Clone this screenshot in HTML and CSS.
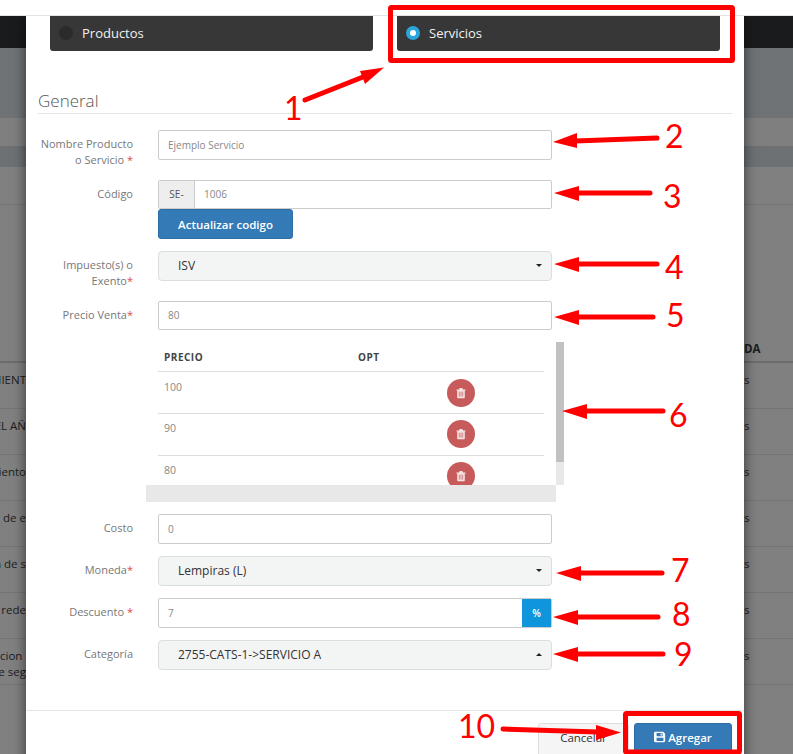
FILE: index.html
```html
<!DOCTYPE html>
<html lang="es">
<head>
<meta charset="utf-8">
<title>Agregar producto o servicio</title>
<link rel="stylesheet" href="styles.css">
</head>
<body>
<div class="page">
  <div class="pg-top"></div>
  <div class="pg-nav"></div>
  <div class="pg-band"></div>
  <div class="pg-light"></div>
  <div class="pg-dark"></div>
  <div class="pg-row pg-r38"></div>
  <div class="pg-row pg-head"><span class="pg-l"></span><span class="pg-r pg-b">DA</span></div>
  <div class="pg-row"><span class="pg-l">MIENT</span><span class="pg-r">s</span></div>
  <div class="pg-row"><span class="pg-l">EL AÑ</span><span class="pg-r">s</span></div>
  <div class="pg-row"><span class="pg-l">iento</span><span class="pg-r">s</span></div>
  <div class="pg-row"><span class="pg-l">a de e</span><span class="pg-r">s</span></div>
  <div class="pg-row"><span class="pg-l">a de s</span><span class="pg-r">s</span></div>
  <div class="pg-row"><span class="pg-l">e rede</span><span class="pg-r">s</span></div>
  <div class="pg-row"><span class="pg-l">cion<br>e seg</span><span class="pg-r">s</span></div>
</div>

<div class="modal">
  <div class="tabs">
    <div class="tab"><span class="radio"></span><span>Productos</span></div>
    <div class="tab"><span class="radio on"></span><span>Servicios</span></div>
  </div>
  <form class="form">
    <h4 class="legend">General</h4>
    <div class="row gap20">
      <label class="lab">Nombre Producto o Servicio <em>*</em></label>
      <div class="input">Ejemplo Servicio</div>
    </div>
    <div class="row">
      <label class="lab">Código</label>
      <div class="field">
        <div class="input group"><span class="prefix">SE-</span><span class="gval">1006</span></div>
        <button type="button" class="btn-update">Actualizar codigo</button>
      </div>
    </div>
    <div class="row gap20">
      <label class="lab">Impuesto(s) o Exento<em>*</em></label>
      <div class="select"><span>ISV</span><i class="caret"></i></div>
    </div>
    <div class="row">
      <label class="lab">Precio Venta<em>*</em></label>
      <div class="input short">80</div>
    </div>
    <div class="scrollbox">
      <div class="viewport">
        <div class="thead"><span class="c1">PRECIO</span><span class="c2">OPT</span></div>
        <div class="trow"><span class="c1">100</span><span class="c2"><span class="del"><svg viewBox="0 0 12 12" class="trash"><path d="M1.5 2.6h9v1h-.7v6.6c0 .6-.4 1-.9 1H3.1c-.5 0-.9-.4-.9-1V3.6h-.7zM4 2.4l.5-1.1c.1-.2.2-.3.4-.3h2.2c.2 0 .3.1.4.3l.5 1.1z"/><path class="bars" d="M4.3 4.6v5M6 4.6v5M7.7 4.6v5"/></svg></span></span></div>
        <div class="trow t2"><span class="c1">90</span><span class="c2"><span class="del"><svg viewBox="0 0 12 12" class="trash"><path d="M1.5 2.6h9v1h-.7v6.6c0 .6-.4 1-.9 1H3.1c-.5 0-.9-.4-.9-1V3.6h-.7zM4 2.4l.5-1.1c.1-.2.2-.3.4-.3h2.2c.2 0 .3.1.4.3l.5 1.1z"/><path class="bars" d="M4.3 4.6v5M6 4.6v5M7.7 4.6v5"/></svg></span></span></div>
        <div class="trow t2"><span class="c1">80</span><span class="c2"><span class="del"><svg viewBox="0 0 12 12" class="trash"><path d="M1.5 2.6h9v1h-.7v6.6c0 .6-.4 1-.9 1H3.1c-.5 0-.9-.4-.9-1V3.6h-.7zM4 2.4l.5-1.1c.1-.2.2-.3.4-.3h2.2c.2 0 .3.1.4.3l.5 1.1z"/><path class="bars" d="M4.3 4.6v5M6 4.6v5M7.7 4.6v5"/></svg></span></span></div>
      </div>
      <div class="vtrack"><div class="vthumb"></div></div>
      <div class="htrack"></div>
    </div>
    <div class="row">
      <label class="lab">Costo</label>
      <div class="input">0</div>
    </div>
    <div class="row">
      <label class="lab">Moneda<em>*</em></label>
      <div class="select"><span>Lempiras (L)</span><i class="caret"></i></div>
    </div>
    <div class="row">
      <label class="lab">Descuento <em>*</em></label>
      <div class="input group tall"><span class="gval2">7</span><span class="addon">%</span></div>
    </div>
    <div class="row">
      <label class="lab">Categoría</label>
      <div class="select"><span>2755-CATS-1-&gt;SERVICIO A</span><i class="caret up"></i></div>
    </div>
  </form>
  <div class="footer">
    <button type="button" class="btn-cancel">Cancelar</button>
    <button type="button" class="btn-add"><svg viewBox="0 0 14 14" class="save"><path fill-rule="evenodd" d="M1.5 1h9.200L13 3.300v8.200c0 .8-.7 1.500-1.500 1.500h-10C.7 13 0 12.300 0 11.500v-9C0 1.700.7 1 1.500 1zM3 2.300v3.400c0 .2.100.3.300.3h6.400c.2 0 .3-.1.300-.3V2.300zM3 8v3.700h8V8zM7.600 2.800h1.500v2.400H7.600z"/></svg>Agregar</button>
  </div>
</div>

<svg class="marks" viewBox="0 0 793 754" width="793" height="754">
  <rect class="box" x="390.500" y="7.500" width="342" height="53" rx="1"/>
  <rect class="box" x="625.500" y="713.500" width="114" height="38.500" rx="1"/>
  <path class="shaft" d="M305 100L368 75"/><path class="head" d="M384 67.500L360 71L365 84z"/>
  <path class="shaft" d="M657 138L575 141"/><path class="head" d="M553 142L577 133L577 148z"/>
  <path class="shaft" d="M650 193L577 193"/><path class="head" d="M554 193L579 186L579 201z"/>
  <path class="shaft" d="M657 264L577 264"/><path class="head" d="M554 264L579 257L579 272z"/>
  <path class="shaft" d="M653 317L577 317"/><path class="head" d="M554 317L579 310L579 325z"/>
  <path class="shaft" d="M663 411L585 411"/><path class="head" d="M562 411L587 404L587 419z"/>
  <path class="shaft" d="M662 573L579 573"/><path class="head" d="M556 573L581 566L581 581z"/>
  <path class="shaft" d="M658 617L576 617"/><path class="head" d="M553 617L578 610L578 625z"/>
  <path class="shaft" d="M663 654L576 654"/><path class="head" d="M553 654L578 647L578 662z"/>
  <path class="shaft" d="M503 729L598 732"/><path class="head" d="M621 732.500L596 725L596 740z"/>
  <text x="284" y="120">1</text>
  <text x="665" y="148">2</text>
  <text x="663" y="208">3</text>
  <text x="665" y="279">4</text>
  <text x="666" y="327">5</text>
  <text x="669" y="427">6</text>
  <text x="671" y="582">7</text>
  <text x="672" y="626">8</text>
  <text x="674" y="666">9</text>
  <text x="458" y="738">10</text>
</svg>
</body>
</html>
```

FILE: styles.css
```css
* { box-sizing: border-box; }
html, body { margin: 0; height: 754px; overflow: hidden; background: #808080; }
body { font-family: "Open Sans", sans-serif; font-size: 12px; color: #333; position: relative; }

/* dimmed page behind the dialog */
.page { width: 793px; color: #1c1c1c; font-size: 11.5px; }
.pg-top { height: 16px; background: #fff; border-bottom: 1px solid #e4e4e4; position: relative; z-index: 2; }
.pg-nav { height: 32px; background: #191b1c; }
.pg-band { height: 70px; background: #6f7375; }
.pg-light { height: 28px; background: #7f7f7f; }
.pg-dark { height: 21px; background: #6d7173; }
.pg-row { height: 46px; display: flex; justify-content: space-between; border-bottom: 1px solid #747474; padding-top: 9px; line-height: 16px; }
.pg-r38 { height: 38px; }
.pg-head { height: 158px; border-bottom: 2px solid #6c6c6c; padding-top: 136px; }
.pg-l { width: 26px; display: block; direction: rtl; overflow: hidden; white-space: nowrap; text-align: left; }
.pg-r { width: 49px; overflow: hidden; white-space: nowrap; }
.pg-b { font-weight: 700; }

/* dialog */
.modal { position: absolute; left: 26px; top: 16px; width: 718px; height: 760px; background: #fff; box-shadow: 0 0 12px rgba(0, 0, 0, .6); z-index: 1; }
.tabs { display: flex; gap: 24px; padding-left: 24px; }
.tab { width: 323px; height: 35px; background: #373737; border-radius: 0 0 3px 3px; color: #f2f2f2; font-size: 13px; display: flex; align-items: center; gap: 9px; padding: 0 0 1px 9px; }
.radio { width: 14px; height: 14px; border-radius: 50%; background: #2b2b2b; }
.radio.on { background: #fff; border: 4px solid #29a6dd; }

.form { padding: 36px 12px 0; }
.legend { margin: 0 0 16px; height: 27px; border-bottom: 1px solid #e5e5e5; font-size: 17px; font-weight: 300; line-height: 27px; color: #555; }
.row { display: flex; gap: 25px; margin-bottom: 12px; }
.row.gap20 { margin-bottom: 20px; }
.lab { width: 95px; height: 28px; flex: none; text-align: right; font-size: 11px; line-height: 16px; padding-top: 6px; color: #777; }
.lab em { color: #e04a4a; font-style: normal; }
.input, .field { width: 394px; }
.input { height: 30px; border: 1px solid #ccc; border-radius: 2px; padding-left: 9px; font-size: 10px; line-height: 28px; color: #888; background: #fff; }
.input.short { height: 29px; line-height: 27px; }
.group { display: flex; padding: 0; height: 29px; }
.group.tall { height: 30px; }
.prefix { width: 36px; background: #eee; border-right: 1px solid #ccc; text-align: center; font-size: 10px; line-height: 27px; color: #555; }
.gval { padding-left: 9px; line-height: 27px; }
.gval2 { padding-left: 9px; flex: 1; line-height: 28px; font-size: 10px; }
.addon { width: 29px; background: #0e95dc; color: #fff; font-size: 10px; font-weight: 600; text-align: center; line-height: 28px; }
.btn-update { display: block; width: 135px; height: 30px; border: 1px solid #2e6da4; border-radius: 3px; background: #337ab7; color: #fff; font: 600 11.5px "Open Sans", sans-serif; padding: 0; }
.select { width: 394px; height: 30px; background: #f3f4f4; border: 1px solid #d9dee0; border-radius: 4px; display: flex; align-items: center; justify-content: space-between; padding: 0 9px 2px 19px; font-size: 12px; color: #333; }
.caret { width: 0; height: 0; border-left: 3px solid transparent; border-right: 3px solid transparent; border-top: 3px solid #222; }
.caret.up { border-top: 0; border-bottom: 3px solid #222; }

/* price list with its scrollbars */
.scrollbox { margin: 0 0 12px 108px; display: grid; grid-template-columns: 410px 8px; grid-template-rows: 143px 17px; width: 418px; }
.viewport { overflow: hidden; padding-left: 12px; }
.thead, .trow { width: 386px; display: flex; border-bottom: 1px solid #ddd; padding-left: 6px; }
.thead { height: 30px; font-size: 10px; font-weight: 700; letter-spacing: .5px; color: #444; line-height: 30px; }
.trow { height: 42px; font-size: 10.5px; color: #888; line-height: 16px; padding-top: 7px; }
.trow.t2 { padding-top: 6px; }
.c1 { width: 194px; flex: none; }
.c2 { flex: 1; }
.del { width: 28px; height: 28px; border-radius: 50%; background: #c75b5b; margin-left: 89px; display: flex; align-items: center; justify-content: center; }
.trash { width: 12px; height: 12px; fill: #f5e3e3; }
.bars { fill: none; stroke: #c75b5b; stroke-width: .7; }
.vtrack { background: #e8e8e8; }
.vthumb { height: 120px; background: #c1c1c1; }
.htrack { background: #e8e8e8; }

.footer { position: absolute; left: 0; right: 0; top: 694px; border-top: 1px solid #e5e5e5; display: flex; justify-content: flex-end; gap: 5px; padding: 12px 12px 0 0; }
.btn-cancel, .btn-add { height: 36px; border-radius: 3px; font: 11.5px "Open Sans", sans-serif; padding: 0 0 8px; }
.btn-cancel { width: 91px; background: #f5f5f5; border: 1px solid #ddd; color: #333; }
.btn-add { width: 98px; background: #337ab7; border: 1px solid #2e6da4; color: #fff; font-weight: 600; display: flex; align-items: center; justify-content: center; gap: 2px; }
.save { width: 12px; height: 12px; fill: #fff; }

/* red annotations drawn on the capture */
.marks { position: absolute; left: 0; top: 0; z-index: 3; }
.box { fill: none; stroke: #f00; stroke-width: 5; }
.shaft { stroke: #f00; stroke-width: 5; stroke-linecap: round; fill: none; }
.head { fill: #f00; }
.marks text { fill: #f00; font: 32px Lato, sans-serif; }
```
